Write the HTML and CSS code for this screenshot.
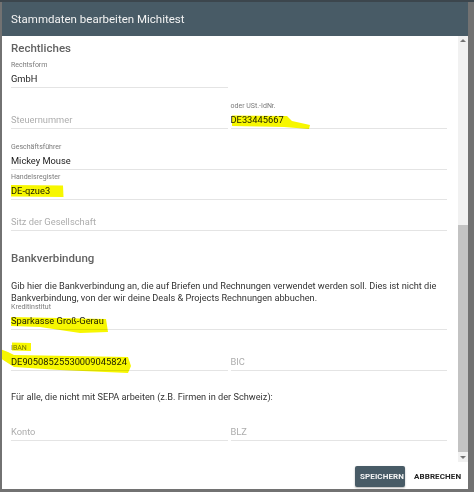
FILE: index.html
```html
<!DOCTYPE html>
<html lang="de">
<head>
<meta charset="utf-8">
<title>Stammdaten bearbeiten</title>
<link rel="stylesheet" href="styles.css">
</head>
<body>
<div class="dialog">
  <header class="dlg-head">Stammdaten bearbeiten Michitest</header>
  <div class="dlg-body">
    <div class="scroll">
      <h2 class="sec sec-legal">Rechtliches</h2>
      <div class="field half f-form"><label>Rechtsform</label><div class="val">GmbH</div></div>
      <div class="row r-tax">
        <div class="field"><label></label><div class="val ph">Steuernummer</div></div>
        <div class="field"><label>oder USt.-IdNr.</label><div class="val">DE33445667</div></div>
      </div>
      <div class="field f-gf"><label>Geschäftsführer</label><div class="val">Mickey Mouse</div></div>
      <div class="field f-hr"><label>Handelsregister</label><div class="val">DE-qzue3</div></div>
      <div class="field f-sitz"><label></label><div class="val ph">Sitz der Gesellschaft</div></div>
      <h2 class="sec sec-bank">Bankverbindung</h2>
      <p class="txt txt-bank">Gib hier die Bankverbindung an, die auf Briefen und Rechnungen verwendet werden soll. Dies ist nicht die Bankverbindung, von der wir deine Deals &amp; Projects Rechnungen abbuchen.</p>
      <div class="field f-kredit"><label>Kreditinstitut</label><div class="val">Sparkasse Groß-Gerau</div></div>
      <div class="row r-iban">
        <div class="field"><label>IBAN</label><div class="val">DE90508525530009045824</div></div>
        <div class="field"><label></label><div class="val ph">BIC</div></div>
      </div>
      <p class="txt txt-sepa">Für alle, die nicht mit SEPA arbeiten (z.B. Firmen in der Schweiz):</p>
      <div class="row r-konto">
        <div class="field"><label></label><div class="val ph">Konto</div></div>
        <div class="field"><label></label><div class="val ph">BLZ</div></div>
      </div>
      <svg class="marks" width="457" height="426" viewBox="0 0 457 426" aria-hidden="true">
        <polygon points="230,79.5 285,80 290,85 308,89 307,93 282,91 230,90"/>
        <polygon points="9,149 61,149.5 61.5,161 9,160.5"/>
        <polygon points="9,281 104,283 106,296 78,297 38,291 9,290"/>
        <polygon points="10,306.5 29,307 29,315 10,314.5"/>
        <polygon points="-2,313 6,316 12,319 126,321 129,330 126,337 58,334 12,331 -2,322"/>
      </svg>
    </div>
    <div class="sbar">
      <span class="sb-btn"><svg width="10" height="10" viewBox="0 0 10 10"><path d="M2.5 6 L5 3.5 L7.5 6" /></svg></span>
      <span class="sb-track"><span class="sb-thumb"></span></span>
      <span class="sb-btn"><svg width="10" height="10" viewBox="0 0 10 10"><path d="M2.5 4 L5 6.5 L7.5 4" /></svg></span>
    </div>
  </div>
  <footer class="dlg-foot">
    <button class="btn btn-primary" type="button">SPEICHERN</button>
    <button class="btn btn-flat" type="button">ABBRECHEN</button>
  </footer>
</div>
</body>
</html>
```
FILE: styles.css
```css
* { box-sizing: border-box; }
html, body { margin: 0; }
body {
  height: 492px;
  overflow: hidden;
  padding: 2px 6px 3px 2px;
  background: linear-gradient(#3c464d 0 2px, #727272 2px);
  font-family: Roboto, "Noto Sans", sans-serif;
}
.dialog {
  width: 466px;
  height: 487px;
  background: #fff;
  display: flex;
  flex-direction: column;
}
.dlg-head {
  flex: 0 0 34px;
  background: #485b66;
  color: #f3f3f3;
  font-size: 11.5px;
  padding-left: 9px;
  display: flex;
  align-items: center;
}
.dlg-body {
  flex: 0 0 426px;
  display: flex;
}
.scroll {
  position: relative;
  flex: 1;
  overflow: hidden;
  padding: 4px 11px 0 9px;
  display: flex;
  flex-direction: column;
}
.scroll > * { flex-shrink: 0; }
.sec {
  margin: 0;
  font-size: 11.5px;
  line-height: 16px;
  font-weight: 500;
  color: #626262;
}
.field {
  display: flex;
  flex-direction: column;
  height: 27px;
  border-bottom: 1px solid #e4e4e4;
}
.field label {
  display: block;
  height: 9px;
  margin-bottom: 1px;
  font-size: 7px;
  line-height: 9px;
  color: #7a7a7a;
  white-space: nowrap;
}
.val {
  font-size: 9.3px;
  line-height: 16px;
  color: #222;
  white-space: nowrap;
  position: relative;
}
.val.ph { color: #adadad; }
.half { width: 217px; }
.row {
  display: grid;
  grid-template-columns: 1fr 1fr;
  gap: 3px;
}
.txt {
  margin: 0;
  font-size: 9.2px;
  line-height: 12px;
  color: #333;
}
.f-form { margin-top: 5px; }
.r-tax { margin-top: 14px; }
.f-gf { margin-top: 14px; }
.f-hr { margin-top: 3px; }
.f-sitz { margin-top: 4px; }
.sec-bank { margin-top: 19px; }
.txt-bank { margin-top: 14px; }
.f-kredit { margin-top: -1px; }
.r-iban { margin-top: 14px; }
.txt-sepa { margin-top: 20px; }
.r-konto { margin-top: 11px; }
.marks {
  position: absolute;
  left: 0;
  top: 0;
  overflow: visible;
  pointer-events: none;
  mix-blend-mode: multiply;
}
.marks polygon { fill: #f7f700; }
.sbar {
  flex: 0 0 10px;
  display: flex;
  flex-direction: column;
  background: #f1f1f1;
}
.sb-btn { flex: 0 0 10px; display: block; }
.sb-btn svg { display: block; }
.sb-btn path { fill: #6e6e6e; stroke: #6e6e6e; stroke-width: 0.8; }
.sb-track {
  flex: 1;
  display: flex;
  flex-direction: column;
  padding-top: 179px;
}
.sb-thumb { flex: 1; background: #c3c3c3; display: block; }
.dlg-foot {
  flex: 0 0 27px;
  display: flex;
  justify-content: flex-end;
  align-items: flex-start;
  gap: 4px;
  padding: 4px 3px 0 0;
}
.btn {
  height: 21px;
  border: 0;
  border-radius: 2px;
  padding: 0 5px;
  font-family: Roboto, "Noto Sans", sans-serif;
  font-size: 8px;
  font-weight: 700;
  letter-spacing: 0.1px;
  cursor: pointer;
}
.btn-primary {
  background: #485b66;
  color: #f4f4f4;
  width: 50px;
  box-shadow: 0 1px 2px rgba(0,0,0,0.3);
}
.btn-flat {
  background: transparent;
  color: #222;
  width: 56px;
}
```
